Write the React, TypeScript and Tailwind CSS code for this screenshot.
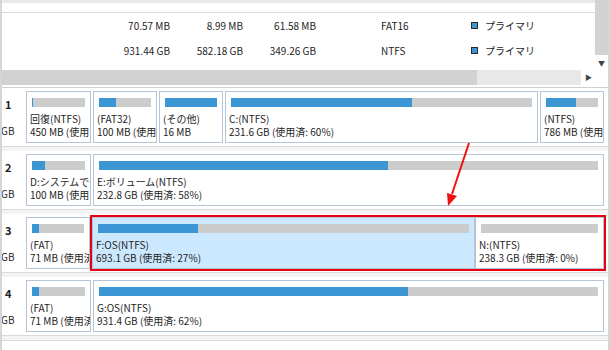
import React from 'react'

type Part = {
  w: string
  used: number
  name: string
  size: string
  selected?: boolean
}

type Disk = {
  no: string
  parts: Part[]
  marked?: boolean
}

// narrow boxes only show the start of their label, as in the real view
const disks: Disk[] = [
  {
    no: '1',
    parts: [
      { w: 'w-[65px]', used: 2, name: '回復(NTFS)', size: '450 MB (使用' },
      { w: 'w-[64px]', used: 33, name: '(FAT32)', size: '100 MB (使用' },
      { w: 'w-[64px]', used: 100, name: '(その他)', size: '16 MB' },
      { w: 'w-[313px]', used: 60, name: 'C:(NTFS)', size: '231.6 GB (使用済: 60%)' },
      { w: 'w-[64px]', used: 57, name: '(NTFS)', size: '786 MB (使用' },
    ],
  },
  {
    no: '2',
    parts: [
      { w: 'w-[65px]', used: 25, name: 'D:システムで予', size: '100 MB (使用' },
      { w: 'w-[511px]', used: 58, name: 'E:ボリューム(NTFS)', size: '232.8 GB (使用済: 58%)' },
    ],
  },
  {
    no: '3',
    marked: true,
    parts: [
      { w: 'w-[64px]', used: 13, name: '(FAT)', size: '71 MB (使用済' },
      { w: 'w-[383px]', used: 27, name: 'F:OS(NTFS)', size: '693.1 GB (使用済: 27%)', selected: true },
      { w: 'w-[129px]', used: 0, name: 'N:(NTFS)', size: '238.3 GB (使用済: 0%)' },
    ],
  },
  {
    no: '4',
    parts: [
      { w: 'w-[65px]', used: 13, name: '(FAT)', size: '71 MB (使用済' },
      { w: 'w-[511px]', used: 62, name: 'G:OS(NTFS)', size: '931.4 GB (使用済: 62%)' },
    ],
  },
]

const volumes = [
  { total: '70.57 MB', free: '8.99 MB', used: '61.58 MB', fs: 'FAT16' },
  { total: '931.44 GB', free: '582.18 GB', used: '349.26 GB', fs: 'NTFS' },
]

function Partition({ p }: { p: Part }) {
  return (
    <div
      className={`${p.w} h-[52px] shrink-0 overflow-hidden border border-[#b7c4d5] ${
        p.selected ? 'bg-[#cce8ff]' : 'bg-white'
      }`}
    >
      <div className="mx-[5px] mt-[6px] h-[9px] bg-[#cccccc]">
        <div className="h-full bg-[#3c96d4]" style={{ width: `${p.used}%` }} />
      </div>
      <div className="mt-[5px] pl-[3px] text-[10px] leading-[13px] text-[#1e1e1e]">
        <div className="overflow-hidden whitespace-nowrap">{p.name}</div>
        <div className="overflow-hidden whitespace-nowrap">{p.size}</div>
      </div>
    </div>
  )
}

function DiskRow({ d }: { d: Disk }) {
  return (
    <div className="border-b border-[#dadada] bg-white py-[3px]">
      <div className="flex h-[52px] items-start">
        <div className="flex w-[24px] shrink-0 flex-col text-[10px] text-[#1e1e1e]">
          <div className="mt-[7px] pl-[3px] text-[11px] font-bold leading-[13px]">{d.no}</div>
          <div className="-ml-[1px] mt-[13px] leading-[13px]">GB</div>
        </div>
        {d.marked ? (
          <>
            <Partition p={d.parts[0]} />
            <div className="-my-[2px] flex border-2 border-[#e60012]">
              {d.parts.slice(1).map((p, i) => (
                <Partition key={i} p={p} />
              ))}
            </div>
          </>
        ) : (
          <div className="flex gap-[2px]">
            {d.parts.map((p, i) => (
              <Partition key={i} p={p} />
            ))}
          </div>
        )}
      </div>
    </div>
  )
}

export default function App() {
  return (
    <div className="relative h-[350px] w-[610px] overflow-hidden border-x-2 border-[#d6d6d6] bg-white font-['Noto_Sans_CJK_JP',sans-serif] text-[#1e1e1e]">
      {/* volume list */}
      <div className="flex h-[86px]">
        <div className="flex w-[593px] flex-col">
          <div className="h-[3px] bg-[#e9e9e9]" />
          <div className="h-[10px] border-b border-[#d9d9e8]" />
          <div className="h-[57px] text-[10px]">
            {volumes.map((v, i) => (
              <div key={i} className="flex h-[25px] items-center">
                <div className="w-[168px] text-right">{v.total}</div>
                <div className="w-[73px] text-right">{v.free}</div>
                <div className="w-[73px] text-right">{v.used}</div>
                <div className="w-[65px]" />
                <div className="w-[90px]">{v.fs}</div>
                <div className="h-[7px] w-[7px] border border-[#2b2b2b] bg-[#3c96d4]" />
                <div className="ml-[7px]">プライマリ</div>
              </div>
            ))}
          </div>
          <div className="flex h-[15px]">
            <div className="w-[475px] bg-[#d2d2d2]" />
            <div className="w-[104px] bg-[#e8e8e8]" />
            <div className="flex flex-1 items-center justify-end pr-[3px] text-[7px] text-[#444]">▶</div>
          </div>
          <div className="h-[1px]" />
        </div>
        <div className="flex w-[13px] flex-col">
          <div className="h-[55px] bg-[#d2d2d2]" />
          <div className="flex h-[16px] items-center justify-center text-[7px] text-[#444]">▼</div>
        </div>
      </div>
      <div className="h-[2px] border-b border-[#d0d0d0]" />

      {/* disk graphic view */}
      <div className="flex flex-col gap-[4px] bg-[#f3f3f3]">
        {disks.map((d) => (
          <DiskRow key={d.no} d={d} />
        ))}
        <div className="h-[11px] border-y border-[#dadada] bg-white" />
      </div>

      <svg className="pointer-events-none absolute left-0 top-0" width="610" height="350">
        <line x1="467" y1="143" x2="450" y2="194" stroke="#ee1111" strokeWidth="2" />
        <polygon points="446,206 455,196 445,193" fill="#ee1111" />
      </svg>
    </div>
  )
}
